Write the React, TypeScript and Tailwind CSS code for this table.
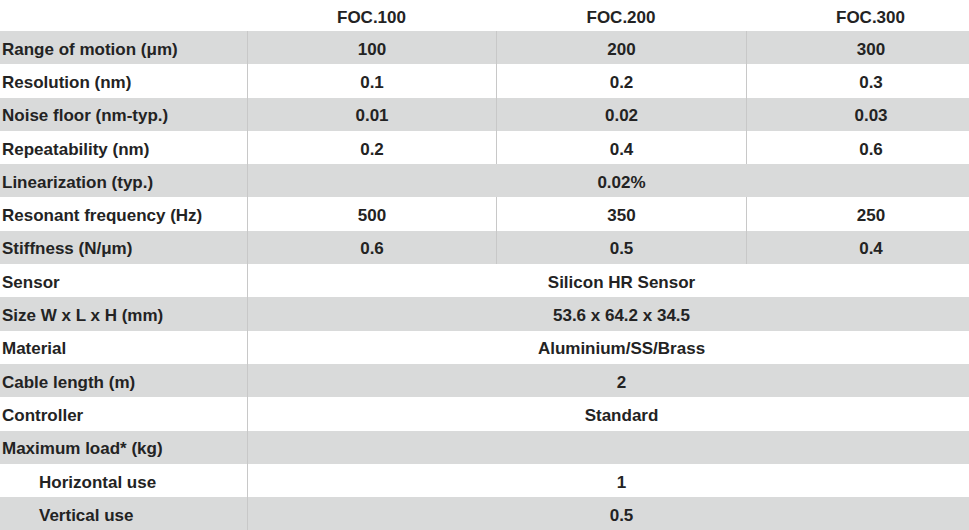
import React from 'react';

type Row = { label: string; values: string[]; indent?: boolean };

const rows: Row[] = [
  { label: 'Range of motion (μm)', values: ['100', '200', '300'] },
  { label: 'Resolution (nm)', values: ['0.1', '0.2', '0.3'] },
  { label: 'Noise floor (nm-typ.)', values: ['0.01', '0.02', '0.03'] },
  { label: 'Repeatability (nm)', values: ['0.2', '0.4', '0.6'] },
  { label: 'Linearization (typ.)', values: ['0.02%'] },
  { label: 'Resonant frequency (Hz)', values: ['500', '350', '250'] },
  { label: 'Stiffness (N/μm)', values: ['0.6', '0.5', '0.4'] },
  { label: 'Sensor', values: ['Silicon HR Sensor'] },
  { label: 'Size W x L x H (mm)', values: ['53.6 x 64.2 x 34.5'] },
  { label: 'Material', values: ['Aluminium/SS/Brass'] },
  { label: 'Cable length (m)', values: ['2'] },
  { label: 'Controller', values: ['Standard'] },
  { label: 'Maximum load* (kg)', values: [''] },
  { label: 'Horizontal use', values: ['1'], indent: true },
  { label: 'Vertical use', values: ['0.5'], indent: true },
];

const App: React.FC = () => {
  return (
    <div className="w-[969px] h-[530px] overflow-hidden bg-white text-[#232323] font-['Liberation_Sans',Arial,sans-serif] font-bold text-[17px] leading-none">
      <div className="w-[995px]">
        <div className="grid grid-cols-[247px_249px_250px_249px] h-[31px] items-center pt-[4px]">
          <div />
          <div className="text-center">FOC.100</div>
          <div className="text-center">FOC.200</div>
          <div className="text-center">FOC.300</div>
        </div>
        {rows.map((row, i) => (
          <div
            key={row.label}
            className={`grid grid-cols-[247px_249px_250px_249px] h-[33.3px] ${i % 2 === 0 ? 'bg-[#d9dada]' : 'bg-white'}`}
          >
            <div className={`flex items-center pt-[3px] ${row.indent ? 'pl-[39px]' : 'pl-[2px]'}`}>{row.label}</div>
            {row.values.length === 3 ? (
              row.values.map((v, j) => (
                <div key={j} className="flex items-center justify-center pt-[3px] border-l border-[#c8c8c8]">
                  {v}
                </div>
              ))
            ) : (
              <div className="col-span-3 flex items-center justify-center pt-[3px] border-l border-[#c8c8c8]">
                {row.values[0]}
              </div>
            )}
          </div>
        ))}
      </div>
    </div>
  );
};

export default App;
